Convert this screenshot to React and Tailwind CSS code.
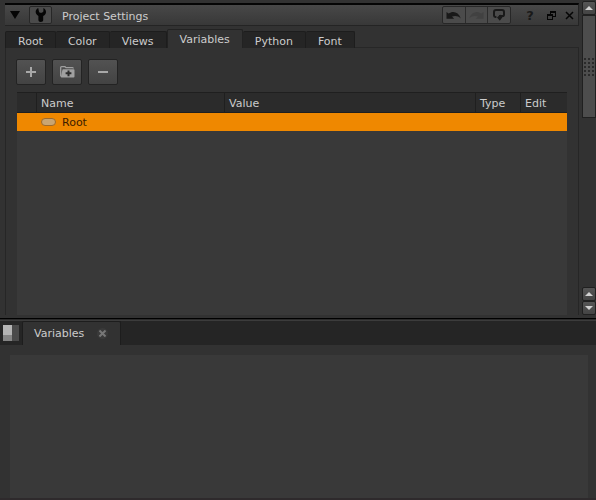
import React, { useState } from 'react';

const TABS = ['Root', 'Color', 'Views', 'Variables', 'Python', 'Font'];

const ROWS = [{ name: 'Root', value: '', type: '', edit: '' }];

const Wrench = () => (
    <svg width="12" height="14" viewBox="0 0 12 14" fill="#050505">
        <path d="M3.2 0 C-0.2 1.6 -0.2 6.2 3.4 8 V12.2 Q3.4 14 5.8 14 Q8.2 14 8.2 12.2 V8 C12 6.2 11.8 1.6 8.4 0 V3.4 L7 4.8 H4.8 L4 3.8 Z" />
    </svg>
);

const Undo = ({ color }) => (
    <svg width="15" height="9" viewBox="0 0 15 9" fill={color}>
        <path d="M0.5 1 L2.6 2.6 C7 -0.6 12.5 1 14.8 7.4 C12 4.8 9 4.4 6 5.6 L8.2 7.8 H0.5 Z" />
    </svg>
);

const Redo = ({ color }) => (
    <svg width="15" height="9" viewBox="0 0 15 9" fill={color}>
        <path d="M14.5 1 L12.4 2.6 C8 -0.6 2.5 1 0.2 7.4 C3 4.8 6 4.4 9 5.6 L6.8 7.8 H14.5 Z" />
    </svg>
);

const Revert = () => (
    <svg width="12" height="12" viewBox="0 0 12 12">
        <path d="M3.4 8 H2.4 Q1 8 1 6.6 V3 Q1 1 3 1 H9 Q11 1 11 3 V5.4 Q11 7 9.4 7 H7 V9" fill="none" stroke="#191919" strokeWidth="2" />
        <path d="M4 8.6 L7.4 5.4 V8 H9.6 L6.8 11.8 Z" fill="#191919" />
    </svg>
);

const FloatIcon = () => (
    <svg width="9" height="9" viewBox="0 0 9 9" fill="none" stroke="#050505" shapeRendering="crispEdges">
        <path d="M3 1 H9 M3.5 0 V4 M8.5 0 V6 M6 5.5 H9 M3 0.5 H9" />
        <path d="M0 4 H6 M0 3.5 H6 M0.5 3 V9 M5.5 3 V9 M0 8.5 H6" />
    </svg>
);

const CloseIcon = () => (
    <svg width="9" height="9" viewBox="0 0 9 9">
        <path d="M1 1 L8 8 M8 1 L1 8" stroke="#050505" strokeWidth="1.5" />
    </svg>
);

const Plus = () => (
    <svg width="10" height="10" viewBox="0 0 10 10">
        <path d="M5 0 V10 M0 5 H10" stroke="#a8a8a8" strokeWidth="2" />
    </svg>
);

const Minus = () => (
    <svg width="10" height="10" viewBox="0 0 10 10">
        <path d="M0 5 H10" stroke="#a8a8a8" strokeWidth="2" />
    </svg>
);

const FolderPlus = () => (
    <svg width="15" height="12" viewBox="0 0 15 12">
        <path d="M0.7 10.5 V1.5 Q0.7 0.7 1.5 0.7 H5 L6 1.7 H12.5 Q13.3 1.7 13.3 2.6" fill="none" stroke="#a0a0a0" strokeWidth="1.3" />
        <path d="M2.4 4 Q2.4 3.2 3.2 3.2 H13.6 Q14.5 3.2 14.5 4 V10.4 Q14.5 11.4 13.5 11.4 H1.6 Q0.6 11.4 1 10.2 Z" fill="#a0a0a0" />
        <path d="M8.5 4.4 V10.2 M5.6 7.3 H11.4" stroke="#2c2c2c" strokeWidth="2" />
    </svg>
);

const Arrow = ({ down }) => (
    <svg width="8" height="4" viewBox="0 0 8 4" fill="#d0d0d0">
        {down ? <path d="M0 0 H8 L4 4 Z" /> : <path d="M0 4 H8 L4 0 Z" />}
    </svg>
);

const Grip = () => (
    <svg width="12" height="18" viewBox="0 0 12 18" fill="#2a2a2a" shapeRendering="crispEdges">
        {[0, 4, 8, 12, 16].map((y) => (
            <g key={y}>
                <rect x="1" y={y} width="2" height="2" />
                <rect x="5" y={y} width="2" height="2" />
                <rect x="9" y={y} width="2" height="2" />
            </g>
        ))}
    </svg>
);

const ToolButton = ({ label, children }) => (
    <button
        aria-label={label}
        className="flex h-[26px] w-[30px] items-center justify-center rounded-xs border border-[#232323] bg-linear-to-b from-[#525252] to-[#434343]"
    >
        {children}
    </button>
);

const ScrollButton = ({ label, down }) => (
    <button
        aria-label={label}
        className="flex h-[14px] w-[14px] items-center justify-center rounded-xs border border-[#202020] bg-linear-to-b from-[#555555] to-[#444444]"
    >
        <Arrow down={down} />
    </button>
);

const TitleBar = () => (
    <header className="flex h-[23px] items-center border-t-2 border-r border-b border-t-[#050505] border-r-[#242424] border-b-[#242424] bg-linear-to-b from-[#484848] to-[#383838]">
        <button aria-label="Collapse" className="ml-[5px] flex w-[10px]">
            <svg width="10" height="8" viewBox="0 0 10 8" fill="#050505">
                <path d="M0 0 H10 L5 8 Z" />
            </svg>
        </button>
        <button
            aria-label="Node settings"
            className="ml-[9px] flex h-[18px] w-[23px] items-center justify-center rounded-xs border border-[#272727] bg-[#4b4b4b]"
        >
            <Wrench />
        </button>
        <h1 className="ml-2.5 flex-1 pt-[3px] text-[#cccccc]">Project Settings</h1>
        <div className="flex h-[18px] w-[69px] rounded-xs border border-[#272727] bg-[#4b4b4b]">
            <button aria-label="Undo" className="flex flex-1 items-center justify-center border-r border-[#2c2c2c]">
                <Undo color="#191919" />
            </button>
            <button aria-label="Redo" disabled className="flex flex-1 items-center justify-center border-r border-[#2c2c2c]">
                <Redo color="#414141" />
            </button>
            <button aria-label="Revert" className="flex flex-1 items-center justify-center">
                <Revert />
            </button>
        </div>
        <button aria-label="Help" className="ml-3.5 w-[10px] pt-[2px] text-[13px] font-bold text-[#191919]">?</button>
        <button aria-label="Float window" className="ml-3 flex"><FloatIcon /></button>
        <button aria-label="Close panel" className="mr-1 ml-[9px] flex"><CloseIcon /></button>
    </header>
);

const VariablesTable = () => (
    <table className="w-full table-fixed border-separate border-spacing-0 text-left">
        <colgroup>
            <col className="w-[20px]" />
            <col className="w-[188px]" />
            <col />
            <col className="w-[45px]" />
            <col className="w-[46px]" />
        </colgroup>
        <thead>
            <tr className="h-[21px] bg-[#2b2b2b] text-[#cccccc]">
                <th aria-label="Expand" className="border-y border-r border-[#1f1f1f] p-0" />
                <th className="border-y border-r border-[#1f1f1f] p-0 pt-[2px] pl-1 font-normal">Name</th>
                <th className="border-y border-r border-[#1f1f1f] p-0 pt-[2px] pl-1 font-normal">Value</th>
                <th className="border-y border-r border-[#1f1f1f] p-0 pt-[2px] pl-1 font-normal">Type</th>
                <th className="border-y border-[#1f1f1f] p-0 pt-[2px] pl-1 font-normal">Edit</th>
            </tr>
        </thead>
        <tbody>
            {ROWS.map((row) => (
                <tr key={row.name} className="h-[18px] bg-[#ef8800] text-[#3c1c00]">
                    <td className="p-0" />
                    <td className="p-0 pl-1">
                        <span className="flex items-center gap-1.5">
                            <span className="h-[8px] w-[15px] rounded-full border border-[#9c6a2c] bg-[#c9a572]" />
                            <span className="pt-[2px]">{row.name}</span>
                        </span>
                    </td>
                    <td className="p-0">{row.value}</td>
                    <td className="p-0">{row.type}</td>
                    <td className="p-0">{row.edit}</td>
                </tr>
            ))}
        </tbody>
    </table>
);

const PanelScrollbar = () => (
    <div className="flex w-[14px] flex-col pt-px pb-[3px]">
        <ScrollButton label="Scroll up" />
        <div className="flex h-[103px] items-center justify-center border border-[#202020] bg-[#4d4d4d]">
            <Grip />
        </div>
        <div className="flex-1" />
        <ScrollButton label="Page up" />
        <ScrollButton label="Scroll down" down />
    </div>
);

export default function App() {
    const [tab, setTab] = useState('Variables');

    return (
        <div className="flex h-screen flex-col bg-[#323232] font-['DejaVu_Sans',sans-serif] text-[11px] leading-[14px]">
            {/* Properties pane */}
            <section className="flex min-h-0 grow-[318] basis-0 gap-[3px]">
                <div className="flex min-w-0 flex-1 flex-col pt-[3px] pb-[3px] pl-[5px]">
                    <TitleBar />

                    <div role="tablist" className="mt-[3px] flex h-[19px] items-end">
                        {TABS.map((name) => (
                            <button
                                key={name}
                                role="tab"
                                aria-selected={name === tab}
                                onClick={() => setTab(name)}
                                className={
                                    name === tab
                                        ? 'h-[19px] rounded-t-xs border-x border-t border-[#222222] bg-[#323232] px-3 pt-[2px] text-[#cccccc]'
                                        : 'h-[17px] rounded-t-xs border-t border-r border-[#1d1d1d] bg-[#252525] px-3 pt-[3px] text-[#cccccc] first:border-l'
                                }
                            >
                                {name}
                            </button>
                        ))}
                        <div className="flex-1 self-stretch border-b border-[#272727]" />
                    </div>

                    <div className="flex min-h-0 flex-1 flex-col border-x border-[#262626] px-2.5 pt-[11px]">
                        <div className="mb-[7px] flex gap-1.5">
                            <ToolButton label="Add variable"><Plus /></ToolButton>
                            <ToolButton label="Add group"><FolderPlus /></ToolButton>
                            <ToolButton label="Remove"><Minus /></ToolButton>
                        </div>
                        <div className="mx-px min-h-0 flex-1 bg-[#393939]">
                            <VariablesTable />
                        </div>
                    </div>
                </div>
                <PanelScrollbar />
            </section>

            {/* Variables pane */}
            <section className="flex min-h-0 grow-[182] basis-0 flex-col">
                <div className="h-[3px] border-t border-b border-t-[#000000] border-b-[#3c3c3c] bg-[#2a2a2a]" />
                <div className="flex h-[24px] items-end bg-[#252525]">
                    <button aria-label="Pane menu" className="mr-[3px] ml-[3px] flex self-center">
                        <svg width="16" height="16" viewBox="0 0 16 16" shapeRendering="crispEdges">
                            <rect width="9" height="10" fill="#b4b4b4" />
                            <rect y="10" width="9" height="6" fill="#858585" />
                            <rect x="9" width="7" height="16" fill="#4a4a4a" />
                        </svg>
                    </button>
                    <div className="flex h-[24px] items-center gap-[13px] rounded-t-xs border-x border-t border-[#1d1d1d] bg-[#323232] pr-3 pl-[11px]">
                        <span className="text-[#cccccc]">Variables</span>
                        <button aria-label="Close tab" className="flex h-[11px] w-[11px] items-center justify-center rounded-full bg-[#3a3a3a]">
                            <svg width="7" height="7" viewBox="0 0 7 7">
                                <path d="M0.5 0.5 L6.5 6.5 M6.5 0.5 L0.5 6.5" stroke="#777777" strokeWidth="2" />
                            </svg>
                        </button>
                    </div>
                </div>
                <div className="mx-2 mt-2.5 ml-2.5 flex-1 bg-[#393939]" />
                <div className="h-[2px] bg-[#2e2a2c]" />
            </section>
        </div>
    );
}
